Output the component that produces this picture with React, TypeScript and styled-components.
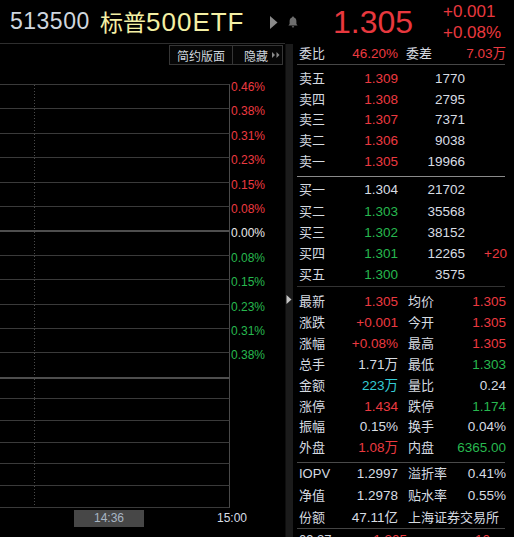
import React from "react";
import styled, { createGlobalStyle } from "styled-components";

type Tone = "red" | "green" | "white" | "cyan";

const tones: Record<Tone, string> = {
  red: "#ec3a40",
  green: "#27b84f",
  white: "#d8dde3",
  cyan: "#35ccd6",
};

const GlobalStyle = createGlobalStyle`
  *, *::before, *::after { box-sizing: border-box; }
  html, body { margin: 0; padding: 0; background: #000; }
  body { font-family: "Liberation Sans", "Noto Sans CJK SC", sans-serif; }
`;

const Screen = styled.div`
  width: 514px;
  height: 537px;
  overflow: hidden;
  background: #000;
  display: flex;
  flex-direction: column;
  font-family: "Liberation Sans", "Noto Sans CJK SC", sans-serif;
`;

/* ---------- header ---------- */

const Header = styled.header`
  height: 43px;
  flex: none;
  display: grid;
  grid-template-columns: 90px 170px 63px 110px 1fr;
  align-items: center;
  padding-left: 10px;
  line-height: 1;
`;

const Code = styled.span`
  font-size: 23px;
  letter-spacing: 0.5px;
  color: #cfd6de;
`;

const Name = styled.span`
  font-family: "Noto Sans CJK SC", sans-serif;
  font-size: 23px;
  color: #f4f0a4;
  white-space: nowrap;
`;

const NameLatin = styled.span`
  font-family: "Liberation Sans", sans-serif;
  font-size: 26px;
  letter-spacing: 1px;
`;

const Tools = styled.div`
  display: flex;
  align-items: center;
  gap: 10px;
  padding-top: 1px;
`;

const BigPrice = styled.span`
  font-size: 32px;
  color: #e8383e;
`;

const Change = styled.div`
  display: flex;
  flex-direction: column;
  font-size: 17px;
  line-height: 21px;
  color: #e8383e;
`;

/* ---------- body ---------- */

const Body = styled.div`
  flex: 1;
  display: flex;
  min-height: 0;
`;

const LeftPanel = styled.section`
  width: 285px;
  flex: none;
  border-top: 1px solid #2e2e2e;
  display: flex;
  flex-direction: column;
`;

const Toolbar = styled.div`
  height: 40px;
  flex: none;
  display: flex;
  justify-content: flex-end;
  align-items: flex-start;
  padding: 1px 2px 0 0;
`;

const ButtonGroup = styled.div`
  display: flex;
  height: 20px;
  border: 1px solid #363636;
  background: #060606;
`;

const ToolButton = styled.div<{ $pl?: number; $pr?: number; $divider?: boolean }>`
  display: flex;
  align-items: center;
  gap: 4px;
  height: 100%;
  padding: 0 ${(p) => p.$pr ?? 7}px 0 ${(p) => p.$pl ?? 7}px;
  font-family: "Noto Sans CJK SC", sans-serif;
  font-size: 12px;
  color: #cfd6de;
  border-left: ${(p) => (p.$divider ? "1px solid #363636" : "none")};
`;

const Chart = styled.div`
  display: flex;
  flex-direction: column;
`;

const ChartRow = styled.div<{ $h: number }>`
  display: flex;
  height: ${(p) => p.$h}px;
`;

const Cell = styled.div<{ $thick?: boolean; $last?: boolean }>`
  width: 230px;
  flex: none;
  border-right: 1px solid #4a4a4a;
  border-top: ${(p) => (p.$thick ? "2px solid #4e4e4e" : "1px solid #3a3a3a")};
  border-bottom: ${(p) => (p.$last ? "1px solid #3a3a3a" : "none")};
  background-image: linear-gradient(to bottom, #4a4a4a 0 1px, transparent 1px 3px);
  background-size: 1px 3px;
  background-position: 34px 0;
  background-repeat: repeat-y;
`;

const Tick = styled.span<{ $tone: Tone }>`
  font-size: 12px;
  line-height: 14px;
  margin-top: -4px;
  padding-left: 1px;
  color: ${(p) => (p.$tone === "white" ? "#e8e8e8" : tones[p.$tone])};
`;

const TimeAxis = styled.div`
  display: flex;
  align-items: flex-start;
  padding-top: 2px;
  font-size: 12px;
  line-height: 17px;
`;

const Cursor = styled.div`
  margin-left: 74px;
  width: 70px;
  height: 17px;
  background: #474747;
  color: #a8b6c4;
  text-align: center;
`;

const EndTime = styled.span`
  margin-left: 73px;
  color: #d8dee6;
`;

const Splitter = styled.div`
  width: 8px;
  flex: none;
  margin-top: 1px;
  background: #1b1b1b;
  border-left: 1px solid #0e0e0e;
  padding-top: 251px;
  display: flex;
  flex-direction: column;
  align-items: flex-start;
`;

/* ---------- right panel ---------- */

const RightPanel = styled.section`
  flex: 1;
  display: flex;
  flex-direction: column;
  padding-top: 1px;
  min-width: 0;
`;

const Section = styled.div<{ $pt?: number; $pb?: number }>`
  padding: ${(p) => p.$pt ?? 0}px 0 ${(p) => p.$pb ?? 0}px;
  flex: none;
`;

const Rule = styled.div<{ $color: string }>`
  height: 1px;
  margin: 0 9px 0 4px;
  background: ${(p) => p.$color};
  flex: none;
`;

const QuoteRow = styled.div<{ $h: number }>`
  display: grid;
  grid-template-columns: 40px 59px 67px 1fr;
  height: ${(p) => p.$h}px;
  line-height: ${(p) => p.$h}px;
  padding: 0 7px 0 6px;
  white-space: nowrap;
`;

const StatRow = styled.div<{ $h: number }>`
  display: grid;
  grid-template-columns: 40px 59px 1fr auto;
  height: ${(p) => p.$h}px;
  line-height: ${(p) => p.$h}px;
  padding: 0 8px 0 6px;
  white-space: nowrap;
`;

const TapeRow = styled.div`
  display: grid;
  grid-template-columns: 60px 48px 83px;
  height: 21px;
  line-height: 21px;
  padding-left: 6px;
`;

const Label = styled.span<{ $indent?: number; $span?: boolean }>`
  font-size: 13px;
  color: #d6dbe0;
  padding-left: ${(p) => p.$indent ?? 0}px;
  grid-column: ${(p) => (p.$span ? "3 / 5" : "auto")};
`;

const Value = styled.span<{ $tone?: Tone }>`
  font-size: 13.5px;
  text-align: right;
  color: ${(p) => tones[p.$tone ?? "white"]};
`;

/* ---------- icons ---------- */

const PlayIcon = () => (
  <svg width="8" height="13" viewBox="0 0 8 13">
    <polygon points="0,0 7.5,6.5 0,13" fill="#8a8a8a" />
  </svg>
);

const BellIcon = () => (
  <svg width="10" height="12" viewBox="0 0 10 12">
    <path
      d="M5 0.5C5.6 0.5 6 1 6 1.6C7.8 2.1 8.4 3.6 8.4 5.6V8L9.6 9.6H0.4L1.6 8V5.6C1.6 3.6 2.2 2.1 4 1.6C4 1 4.4 0.5 5 0.5Z"
      fill="#6e6e6e"
    />
    <path d="M3.8 10.3H6.2A1.2 1.2 0 0 1 3.8 10.3Z" fill="#6e6e6e" />
  </svg>
);

const DoubleArrow = () => (
  <svg width="8" height="6" viewBox="0 0 8 6">
    <polygon points="0,0 3,3 0,6" fill="#8a8a8a" />
    <polygon points="4.5,0 7.5,3 4.5,6" fill="#8a8a8a" />
  </svg>
);

const Handle = () => (
  <svg width="6" height="9" viewBox="0 0 6 9">
    <polygon points="0.5,0 5.5,4.5 0.5,9" fill="#c4c4c4" />
  </svg>
);

/* ---------- data ---------- */

const priceTicks: { label: string; tone: Tone }[] = [
  { label: "0.46%", tone: "red" },
  { label: "0.38%", tone: "red" },
  { label: "0.31%", tone: "red" },
  { label: "0.23%", tone: "red" },
  { label: "0.15%", tone: "red" },
  { label: "0.08%", tone: "red" },
  { label: "0.00%", tone: "white" },
  { label: "0.08%", tone: "green" },
  { label: "0.15%", tone: "green" },
  { label: "0.23%", tone: "green" },
  { label: "0.31%", tone: "green" },
  { label: "0.38%", tone: "green" },
];

const asks = [
  { name: "卖五", price: "1.309", vol: "1770" },
  { name: "卖四", price: "1.308", vol: "2795" },
  { name: "卖三", price: "1.307", vol: "7371" },
  { name: "卖二", price: "1.306", vol: "9038" },
  { name: "卖一", price: "1.305", vol: "19966" },
];

const bids: { name: string; price: string; vol: string; tone: Tone; delta?: string }[] = [
  { name: "买一", price: "1.304", vol: "21702", tone: "white" },
  { name: "买二", price: "1.303", vol: "35568", tone: "green" },
  { name: "买三", price: "1.302", vol: "38152", tone: "green" },
  { name: "买四", price: "1.301", vol: "12265", tone: "green", delta: "+20" },
  { name: "买五", price: "1.300", vol: "3575", tone: "green" },
];

type Stat = [string, string, Tone, string, string, Tone];

const stats: Stat[] = [
  ["最新", "1.305", "red", "均价", "1.305", "red"],
  ["涨跌", "+0.001", "red", "今开", "1.305", "red"],
  ["涨幅", "+0.08%", "red", "最高", "1.305", "red"],
  ["总手", "1.71万", "white", "最低", "1.303", "green"],
  ["金额", "223万", "cyan", "量比", "0.24", "white"],
  ["涨停", "1.434", "red", "跌停", "1.174", "green"],
  ["振幅", "0.15%", "white", "换手", "0.04%", "white"],
  ["外盘", "1.08万", "red", "内盘", "6365.00", "green"],
];

export default function App() {
  return (
    <>
      <GlobalStyle />
      <Screen>
        <Header>
          <Code>513500</Code>
          <Name>
            标普<NameLatin>500ETF</NameLatin>
          </Name>
          <Tools>
            <PlayIcon />
            <BellIcon />
          </Tools>
          <BigPrice>1.305</BigPrice>
          <Change>
            <span>+0.001</span>
            <span>+0.08%</span>
          </Change>
        </Header>

        <Body>
          <LeftPanel>
            <Toolbar>
              <ButtonGroup>
                <ToolButton>简约版面</ToolButton>
                <ToolButton $divider $pl={11} $pr={2}>
                  隐藏
                  <DoubleArrow />
                </ToolButton>
              </ButtonGroup>
            </Toolbar>

            <Chart>
              {priceTicks.map((t, i) => (
                <ChartRow key={i} $h={24.4}>
                  <Cell $thick={i === 6} />
                  <Tick $tone={t.tone}>{t.label}</Tick>
                </ChartRow>
              ))}
              {Array.from({ length: 6 }).map((_, i) => (
                <ChartRow key={"v" + i} $h={i === 5 ? 22.7 : 21.7}>
                  <Cell $thick={i === 0} $last={i === 5} />
                </ChartRow>
              ))}
            </Chart>

            <TimeAxis>
              <Cursor>14:36</Cursor>
              <EndTime>15:00</EndTime>
            </TimeAxis>
          </LeftPanel>

          <Splitter>
            <Handle />
          </Splitter>

          <RightPanel>
            <StatRow $h={20}>
              <Label>委比</Label>
              <Value $tone="red">46.20%</Value>
              <Label $indent={8}>委差</Label>
              <Value $tone="red">7.03万</Value>
            </StatRow>
            <Rule $color="#474747" />

            <Section $pt={4} $pb={4}>
              {asks.map((a) => (
                <QuoteRow key={a.name} $h={20.7}>
                  <Label>{a.name}</Label>
                  <Value $tone="red">{a.price}</Value>
                  <Value>{a.vol}</Value>
                </QuoteRow>
              ))}
            </Section>
            <Rule $color="#8a8a8a" />

            <Section $pt={2} $pb={1}>
              {bids.map((b) => (
                <QuoteRow key={b.name} $h={21.1}>
                  <Label>{b.name}</Label>
                  <Value $tone={b.tone}>{b.price}</Value>
                  <Value>{b.vol}</Value>
                  <Value $tone="red">{b.delta ?? ""}</Value>
                </QuoteRow>
              ))}
            </Section>
            <Rule $color="#333333" />

            <Section $pt={5.2} $pb={3}>
              {stats.map((s) => (
                <StatRow key={s[0]} $h={20.9}>
                  <Label>{s[0]}</Label>
                  <Value $tone={s[2]}>{s[1]}</Value>
                  <Label $indent={10}>{s[3]}</Label>
                  <Value $tone={s[5]}>{s[4]}</Value>
                </StatRow>
              ))}
            </Section>
            <Rule $color="#4a4a4a" />

            <Section>
              <StatRow $h={21.7}>
                <Label>IOPV</Label>
                <Value>1.2997</Value>
                <Label $indent={10}>溢折率</Label>
                <Value>0.41%</Value>
              </StatRow>
              <StatRow $h={21.7}>
                <Label>净值</Label>
                <Value>1.2978</Value>
                <Label $indent={10}>贴水率</Label>
                <Value>0.55%</Value>
              </StatRow>
              <StatRow $h={21.7}>
                <Label>份额</Label>
                <Value>47.11亿</Value>
                <Label $indent={10} $span>
                  上海证券交易所
                </Label>
              </StatRow>
            </Section>
            <Rule $color="#444444" />

            <TapeRow>
              <Label>09:37</Label>
              <Value $tone="red">1.305</Value>
              <Value $tone="red">10</Value>
            </TapeRow>
          </RightPanel>
        </Body>
      </Screen>
    </>
  );
}
